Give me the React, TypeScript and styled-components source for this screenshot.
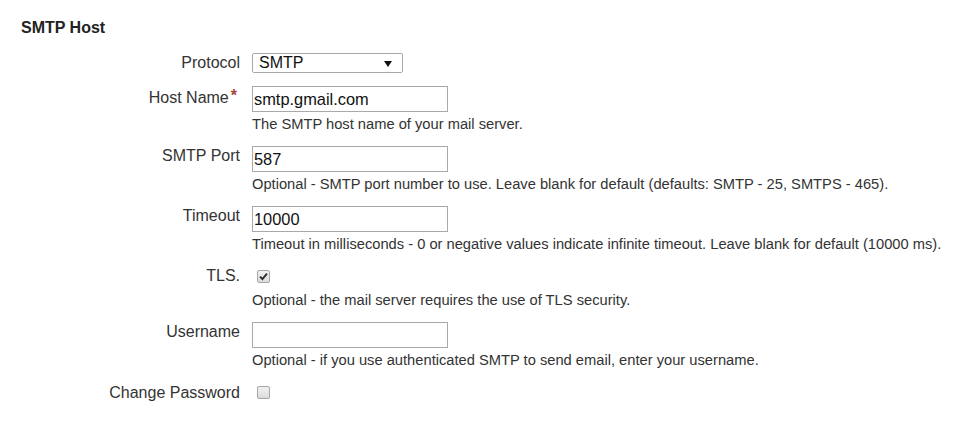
import styled, { createGlobalStyle } from "styled-components";

/* page base */
const GlobalStyle = createGlobalStyle`
  html, body {
    margin: 0;
    padding: 0;
    background: #fff;
  }
  body {
    font-family: Arial, "Liberation Sans", sans-serif;
    color: #333;
  }
`;

/* form rows - label / control / help text */
const fields = [
  { label: "Host Name", required: true, value: "smtp.gmail.com", help: "The SMTP host name of your mail server." },
  {
    label: "SMTP Port",
    value: "587",
    help: "Optional - SMTP port number to use. Leave blank for default (defaults: SMTP - 25, SMTPS - 465).",
  },
  {
    label: "Timeout",
    value: "10000",
    help: "Timeout in milliseconds - 0 or negative values indicate infinite timeout. Leave blank for default (10000 ms).",
  },
];

const CheckMark = () => (
  <svg width="9" height="9" viewBox="0 0 9 9">
    <path d="M1 4.6 L3.4 7 L8 1.6" fill="none" stroke="#2b2b2b" strokeWidth="1.9" />
  </svg>
);

const App = () => {
  return (
    <>
      <GlobalStyle />
      <Page>
        <ClippedIntro>
          Configure the mail server that you will use to send your notifications and the way they are sent to you.
        </ClippedIntro>
        <Heading>SMTP Host</Heading>
        <Form>
          <Row>
            <Label>Protocol</Label>
            <Field>
              <SelectBox>
                <span>SMTP</span>
                <svg width="8" height="8" viewBox="0 0 8 8">
                  <path d="M0 1 H8 L4 7 Z" fill="#111" />
                </svg>
              </SelectBox>
            </Field>
          </Row>

          {fields.map((f) => (
            <Row key={f.label}>
              <Label>
                {f.label}
                {f.required && <Required>*</Required>}
              </Label>
              <Field>
                <TextInput defaultValue={f.value} />
                <Help>{f.help}</Help>
              </Field>
            </Row>
          ))}

          <Row>
            <Label>TLS.</Label>
            <Field>
              <CheckCell>
                <Box>
                  <CheckMark />
                </Box>
              </CheckCell>
              <Help>Optional - the mail server requires the use of TLS security.</Help>
            </Field>
          </Row>

          <Row>
            <Label>Username</Label>
            <Field>
              <TextInput defaultValue="" />
              <Help>Optional - if you use authenticated SMTP to send email, enter your username.</Help>
            </Field>
          </Row>

          <Row>
            <Label $check>Change Password</Label>
            <Field>
              <CheckCell>
                <Box />
              </CheckCell>
            </Field>
          </Row>
        </Form>
      </Page>
    </>
  );
};

export default App;

const Page = styled.div`
  width: 956px;
  height: 421px;
  overflow: hidden;
  padding-left: 21px;
  box-sizing: border-box;
`;

const ClippedIntro = styled.p`
  margin: -18px 0 0 0;
  font-size: 14.7px;
  line-height: 18px;
  color: #333;
  white-space: nowrap;
`;

const Heading = styled.h2`
  margin: 18px 0 0;
  font-size: 16px;
  line-height: 20px;
  font-weight: 700;
  color: #222;
  height: 20px;
`;

const Form = styled.div`
  display: flex;
  flex-direction: column;
  gap: 13px;
  margin-top: 15px;
`;

const Row = styled.div`
  display: grid;
  grid-template-columns: 219px 1fr;
  column-gap: 12px;
`;

const Label = styled.div<{ $check?: boolean }>`
  text-align: right;
  font-size: 16px;
  line-height: 20px;
  color: #333;
  padding-top: ${(p) => (p.$check ? "1px" : "0")};
  white-space: nowrap;
`;

const Required = styled.span`
  color: #a2453c;
  font-size: 16px;
  font-weight: 700;
  margin: 0 3px 0 2px;
  vertical-align: 2px;
`;

const Field = styled.div`
  display: flex;
  flex-direction: column;
  align-items: flex-start;
`;

const SelectBox = styled.div`
  box-sizing: border-box;
  width: 151px;
  height: 20px;
  display: flex;
  align-items: center;
  justify-content: space-between;
  padding: 0 10px 0 6px;
  border: 1px solid #a9a9a9;
  border-radius: 2px;
  background: #fff;
  font-size: 16px;
  color: #111;

  svg {
    margin-top: 1px;
  }
`;

const TextInput = styled.input`
  box-sizing: border-box;
  width: 196px;
  height: 26px;
  margin: 0;
  padding: 0 1px;
  border: 1px solid #a9a9a9;
  border-radius: 0;
  background: #fff;
  font-family: Arial, "Liberation Sans", sans-serif;
  font-size: 16.4px;
  color: #111;
  outline: none;
`;

const Help = styled.div`
  margin-top: 3px;
  font-size: 14.7px;
  line-height: 18px;
  color: #333;
  white-space: nowrap;
`;

const CheckCell = styled.div`
  height: 22px;
  display: flex;
  align-items: flex-start;
  padding: 4px 0 0 5px;
  box-sizing: border-box;
`;

const Box = styled.span`
  box-sizing: border-box;
  width: 13px;
  height: 13px;
  display: flex;
  align-items: center;
  justify-content: center;
  border: 1px solid #a6a6a6;
  border-radius: 2px;
  background: linear-gradient(#f1f1f1, #dcdcdc);
`;
